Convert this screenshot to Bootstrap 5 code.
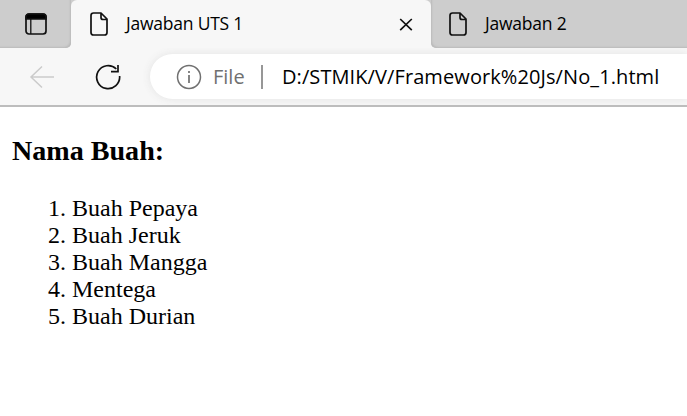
<!DOCTYPE html>
<html lang="id">
<head>
<meta charset="utf-8">
<meta name="viewport" content="width=device-width, initial-scale=1">
<title>Jawaban UTS 1</title>
<link href="https://cdn.jsdelivr.net/npm/bootstrap@5.3.0/dist/css/bootstrap.min.css" rel="stylesheet">
<style>
body{font-family:"Open Sans","Noto Sans",sans-serif;color:#000;background:#fff;height:416px}
svg{display:block;flex:none;fill:none;stroke:#111;stroke-width:1.7}
.tabstrip{height:48px;background:#f7f7f7}
.strip-left{width:71px;background:#cdcdcd;border-bottom-right-radius:5px;box-shadow:inset -2px -2px 2px -1px #bababa;padding:13px 0 0 25px}
.tab-back{width:360px;background:linear-gradient(#cdcdcd 20px,#f7f7f7 20px)}
.tab-active{background:#f7f7f7;border-radius:6px 6px 0 0;padding:0 18px 0 19px}
.strip-right{background:#cdcdcd;border-bottom-left-radius:5px;box-shadow:inset 2px -2px 2px -1px #bababa;padding-left:18px}
.tab-title{font-size:17.5px;font-weight:400;line-height:24px;letter-spacing:-.22px;margin-left:18px;position:relative;top:-1px}
.toolbar{height:59px;background:#f7f7f7;border-bottom:2px solid #bdbdbd;padding:6px 0 6px 29px}
.reload{margin-left:40px}
.address{height:45px;background:#fff;border-radius:23px 0 0 23px;box-shadow:0 0 8px #e3e3e3;margin-left:29px;padding-left:26px}
.scheme{color:#707070;font-size:20px;margin-left:11px;width:34px}
.divider{width:2px;height:24px;background:#979797;margin:0 0 0 14px}
.url{font-size:20px;margin-left:19px;letter-spacing:.09px}
.document{font-family:"Liberation Serif","Times New Roman",serif;padding:28px 12px}
.document h3{font-size:28.08px;line-height:32px;font-weight:700;margin:0 0 28px}
.document ol{font-size:24px;line-height:27px;margin:0;padding-left:60px}
</style>
</head>
<body class="overflow-hidden">
<header>
<div class="tabstrip d-flex">
  <div class="strip-left flex-shrink-0"><svg width="22" height="22" viewBox="0 0 22 22"><rect x="1" y="1" width="20" height="20" rx="3"/><path d="M1 6V4q0-3 3-3h14q3 0 3 3v2z" fill="#000"/><path d="M5.8 6v15" stroke-width="1.3"/></svg></div>
  <div class="tab-back flex-shrink-0"><div class="tab-active h-100 d-flex align-items-center">
    <svg width="18" height="24" viewBox="0 0 18 24"><path d="M3.5 1H11l6 6v13.500q0 2.500-2.500 2.500h-11Q1 23 1 20.500v-17Q1 1 3.500 1zM11 1v4.500Q11 7.500 13 7.500h4" stroke-linejoin="round"/></svg>
    <span class="tab-title text-nowrap">Jawaban UTS 1</span>
    <svg class="ms-auto" width="14" height="14" viewBox="0 0 14 14"><path d="M1.200 2l11.600 11.200M12.800 2L1.200 13.200"/></svg>
  </div></div>
  <div class="strip-right flex-grow-1 d-flex align-items-center">
    <svg width="18" height="24" viewBox="0 0 18 24"><path d="M3.500 1H11l6 6v13.500q0 2.500-2.500 2.500h-11Q1 23 1 20.500v-17Q1 1 3.500 1zM11 1v4.500Q11 7.500 13 7.500h4" stroke-linejoin="round"/></svg>
    <span class="tab-title text-nowrap">Jawaban 2</span>
  </div>
</div>
<div class="toolbar d-flex align-items-center overflow-hidden">
  <svg width="26" height="24" viewBox="0 0 26 24"><path d="M25 12H2M13 1.500L2 12l11 10.500" stroke="#cbcbcb" stroke-width="1.500"/></svg>
  <svg class="reload" width="26" height="26" viewBox="0 0 26 26"><path d="M24.600 12A11.500 11.500 0 1 1 21.300 5M23 1v6.700H16"/></svg>
  <div class="address flex-grow-1 d-flex align-items-center">
    <svg width="26" height="26" viewBox="0 0 26 26"><circle cx="13" cy="13" r="11.500" stroke="#707070" stroke-width="1.500"/><path d="M13 11v8M13 7v2" stroke="#707070"/></svg>
    <span class="scheme text-nowrap">File</span>
    <span class="divider"></span>
    <span class="url text-nowrap">D:/STMIK/V/Framework%20Js/No_1.html</span>
  </div>
</div>
</header>
<main class="document">
<h3>Nama Buah:</h3>
<ol><li>Buah Pepaya</li><li>Buah Jeruk</li><li>Buah Mangga</li><li>Mentega</li><li>Buah Durian</li></ol>
</main>
<script src="https://cdn.jsdelivr.net/npm/bootstrap@5.3.0/dist/js/bootstrap.bundle.min.js"></script>
</body>
</html>
